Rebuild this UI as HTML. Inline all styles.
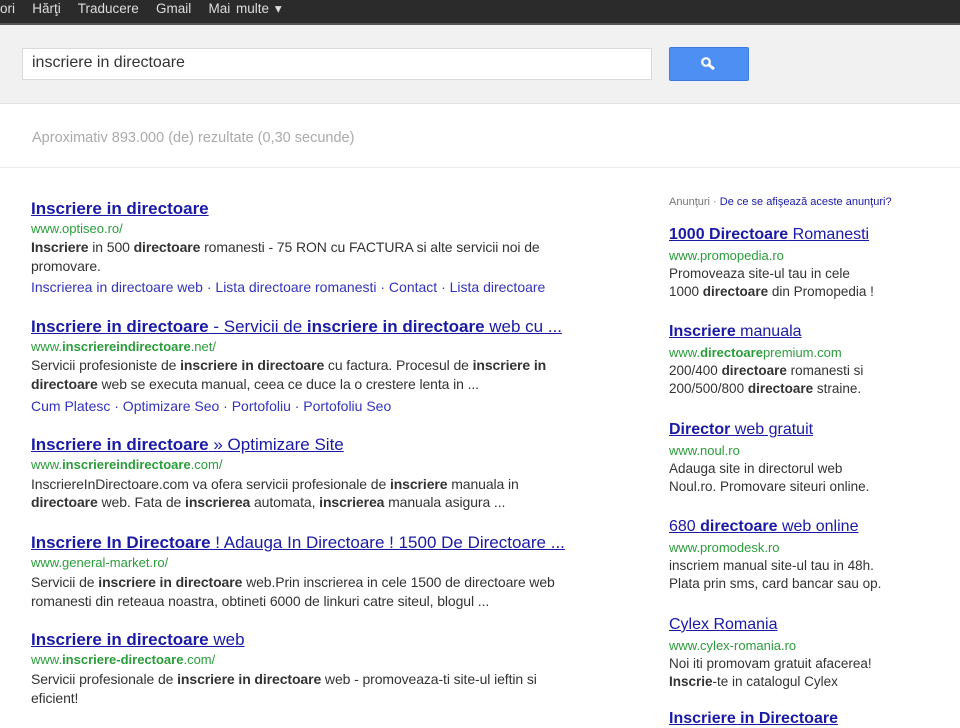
<!DOCTYPE html>
<html><head><meta charset="utf-8"><style>
body{margin:0;width:960px;height:720px;overflow:hidden;background:#fff;font-family:"Liberation Sans",Arial,sans-serif;position:relative}
.a{position:absolute;white-space:nowrap}
.t{font-size:17px;color:#1a1aa6;text-decoration:underline}
.t b{font-weight:bold}
.u{font-size:13px;color:#2a9d3a}
.d{font-size:14px;color:#333;letter-spacing:-0.1px}
.l{font-size:14px;color:#3333bb}
.at{font-size:16px;color:#1a1aa6;text-decoration:underline}
.ad{font-size:13.5px;color:#333}
</style></head><body>
<div class="a" style="left:0;top:0;width:960px;height:23px;background:#2b2b2b;border-bottom:2px solid #555"></div>
<div class="a" style="left:0;top:0;font-size:13.5px;color:#ddd;line-height:17px;word-spacing:2px">ori&nbsp;&nbsp; Hărţi&nbsp;&nbsp; Traducere&nbsp;&nbsp; Gmail&nbsp;&nbsp; Mai multe ▾</div>
<div class="a" style="left:0;top:25px;width:960px;height:78px;background:#f1f1f1;border-bottom:1px solid #e2e2e2"></div>
<div class="a" style="left:22px;top:48px;width:628px;height:30px;background:#fff;border:1px solid #d9d9d9"></div>
<div class="a" style="left:32px;top:54px;font-size:16px;color:#333">inscriere in directoare</div>
<div class="a" style="left:669px;top:47px;width:78px;height:32px;background:#4d8ff2;border:1px solid #3b7ae0;border-radius:2px"></div>
<svg class="a" style="left:700px;top:56px" width="16" height="14" viewBox="0 0 16 14"><circle cx="6" cy="6" r="3.8" fill="none" stroke="#fff" stroke-width="2.2"/><path d="M9 9l5 4" stroke="#fff" stroke-width="3"/></svg>
<div class="a" style="left:32px;top:130px;font-size:14.5px;color:#aaa">Aproximativ 893.000 (de) rezultate (0,30 secunde)</div>
<div class="a" style="left:0;top:167px;width:960px;height:1px;background:#ececec"></div>

<div class="a t" style="left:31px;top:199px"><b>Inscriere in directoare</b></div>
<div class="a u" style="left:31px;top:221px">www.optiseo.ro/</div>
<div class="a d" style="left:31px;top:239px"><b>Inscriere</b> in 500 <b>directoare</b> romanesti - 75 RON cu FACTURA si alte servicii noi de</div>
<div class="a d" style="left:31px;top:258px">promovare.</div>
<div class="a l" style="left:31px;top:279px">Inscrierea in directoare web · Lista directoare romanesti · Contact · Lista directoare</div>

<div class="a t" style="left:31px;top:317px"><b>Inscriere in directoare</b> - Servicii de <b>inscriere in directoare</b> web cu ...</div>
<div class="a u" style="left:31px;top:339px">www.<b>inscriereindirectoare</b>.net/</div>
<div class="a d" style="left:31px;top:357px">Servicii profesioniste de <b>inscriere in directoare</b> cu factura. Procesul de <b>inscriere in</b></div>
<div class="a d" style="left:31px;top:376px"><b>directoare</b> web se executa manual, ceea ce duce la o crestere lenta in ...</div>
<div class="a l" style="left:31px;top:398px">Cum Platesc · Optimizare Seo · Portofoliu · Portofoliu Seo</div>

<div class="a t" style="left:31px;top:435px"><b>Inscriere in directoare</b> » Optimizare Site</div>
<div class="a u" style="left:31px;top:457px">www.<b>inscriereindirectoare</b>.com/</div>
<div class="a d" style="left:31px;top:476px">InscriereInDirectoare.com va ofera servicii profesionale de <b>inscriere</b> manuala in</div>
<div class="a d" style="left:31px;top:494px"><b>directoare</b> web. Fata de <b>inscrierea</b> automata, <b>inscrierea</b> manuala asigura ...</div>

<div class="a t" style="left:31px;top:533px"><b>Inscriere In Directoare</b> ! Adauga In Directoare ! 1500 De Directoare ...</div>
<div class="a u" style="left:31px;top:555px">www.general-market.ro/</div>
<div class="a d" style="left:31px;top:574px">Servicii de <b>inscriere in directoare</b> web.Prin inscrierea in cele 1500 de directoare web</div>
<div class="a d" style="left:31px;top:593px">romanesti din reteaua noastra, obtineti 6000 de linkuri catre siteul, blogul ...</div>

<div class="a t" style="left:31px;top:630px"><b>Inscriere in directoare</b> web</div>
<div class="a u" style="left:31px;top:652px">www.<b>inscriere-directoare</b>.com/</div>
<div class="a d" style="left:31px;top:671px">Servicii profesionale de <b>inscriere in directoare</b> web - promoveaza-ti site-ul ieftin si</div>
<div class="a d" style="left:31px;top:690px">eficient!</div>

<div class="a" style="left:669px;top:196px;font-size:11px;color:#777">Anunţuri · <span style="color:#1a1aa6">De ce se afişează aceste anunţuri?</span></div>
<div class="a at" style="left:669px;top:226px"><b>1000 Directoare</b> Romanesti</div>
<div class="a u" style="left:669px;top:248px">www.promopedia.ro</div>
<div class="a ad" style="left:669px;top:266px">Promoveaza site-ul tau in cele</div>
<div class="a ad" style="left:669px;top:284px">1000 <b>directoare</b> din Promopedia !</div>

<div class="a at" style="left:669px;top:323px"><b>Inscriere</b> manuala</div>
<div class="a u" style="left:669px;top:345px">www.<b>directoare</b>premium.com</div>
<div class="a ad" style="left:669px;top:363px">200/400 <b>directoare</b> romanesti si</div>
<div class="a ad" style="left:669px;top:381px">200/500/800 <b>directoare</b> straine.</div>

<div class="a at" style="left:669px;top:421px"><b>Director</b> web gratuit</div>
<div class="a u" style="left:669px;top:443px">www.noul.ro</div>
<div class="a ad" style="left:669px;top:461px">Adauga site in directorul web</div>
<div class="a ad" style="left:669px;top:479px">Noul.ro. Promovare siteuri online.</div>

<div class="a at" style="left:669px;top:518px">680 <b>directoare</b> web online</div>
<div class="a u" style="left:669px;top:540px">www.promodesk.ro</div>
<div class="a ad" style="left:669px;top:558px">inscriem manual site-ul tau in 48h.</div>
<div class="a ad" style="left:669px;top:576px">Plata prin sms, card bancar sau op.</div>

<div class="a at" style="left:669px;top:616px">Cylex Romania</div>
<div class="a u" style="left:669px;top:638px">www.cylex-romania.ro</div>
<div class="a ad" style="left:669px;top:656px">Noi iti promovam gratuit afacerea!</div>
<div class="a ad" style="left:669px;top:674px"><b>Inscrie</b>-te in catalogul Cylex</div>
<div class="a at" style="left:669px;top:710px"><b>Inscriere in Directoare</b></div>
</body></html>
